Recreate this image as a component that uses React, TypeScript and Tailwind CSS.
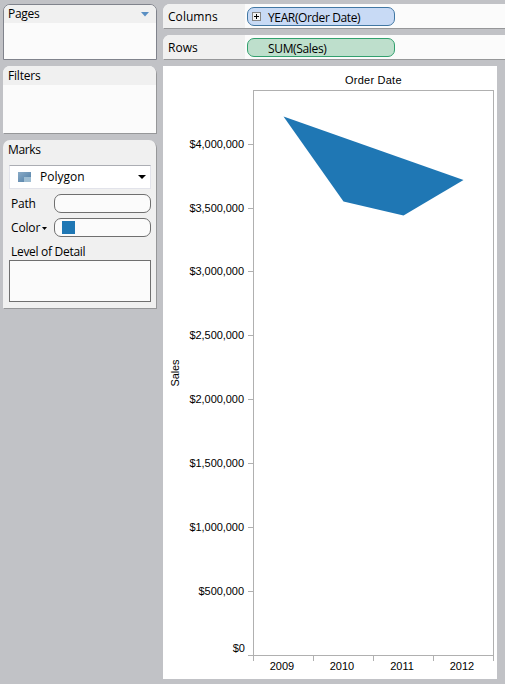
import React from 'react';

const ui = "font-['Open_Sans','Noto_Sans',sans-serif] text-[12px] leading-[16px] text-black";

const yTicks = [
  { label: '$4,000,000', y: 144 },
  { label: '$3,500,000', y: 208 },
  { label: '$3,000,000', y: 271 },
  { label: '$2,500,000', y: 335 },
  { label: '$2,000,000', y: 399 },
  { label: '$1,500,000', y: 463 },
  { label: '$1,000,000', y: 527 },
  { label: '$500,000', y: 591 },
];
const years = ['2009', '2010', '2011', '2012'];

function Shelf({ label, children }: { label: string; children: React.ReactNode }) {
  return (
    <div className="flex h-[24px] w-[342px] overflow-hidden rounded-tl-[7px] bg-[#fbfbfb] shadow-[1px_1px_0_#969799]">
      <div className="w-[82px] shrink-0 bg-[#f0f0f0] pl-[5px] pt-[5px] tracking-[0.05px]">{label}</div>
      <div className="pl-[2px] pt-[3px]">{children}</div>
    </div>
  );
}

function Chart() {
  return (
    <svg
      width="334"
      height="613"
      viewBox="163 66 334 613"
      className="block bg-white font-['Liberation_Sans',Arial,sans-serif] text-[11px]"
    >
      <polygon points="283.5,116.5 463.5,180 403.5,215.5 343.5,201.5" fill="#1f77b4" />
      <g stroke="#b0b0b0" fill="none" shapeRendering="crispEdges">
        <rect x="253.5" y="90.5" width="240" height="565" />
        {yTicks.map((t) => (
          <path key={t.label} d={`M248 ${t.y + 0.5}H253`} />
        ))}
        <path d="M248 655.5H253" />
        {[253.5, 313.5, 373.5, 433.5, 493.5].map((x) => (
          <path key={x} d={`M${x} 655V661`} />
        ))}
      </g>
      <text x="345" y="84" textLength="56.5">Order Date</text>
      {yTicks.map((t) => (
        <text key={t.label} x="244" y={t.y + 4} textAnchor="end" letterSpacing="-0.05">{t.label}</text>
      ))}
      <text x="245" y="652" textAnchor="end">$0</text>
      {years.map((year, i) => (
        <text key={year} x={282 + i * 60} y="670" textAnchor="middle">{year}</text>
      ))}
      <text transform="translate(179 386.5) rotate(-90)" textLength="27">Sales</text>
    </svg>
  );
}

export default function App() {
  return (
    <div className={`flex h-[684px] w-[505px] gap-[6px] overflow-hidden bg-[#c1c2c6] pl-[3px] pt-[4px] ${ui}`}>
      <aside className="flex w-[154px] shrink-0 flex-col">
        <section className="h-[56px] overflow-hidden rounded-t-[7px] border border-[#80838c] bg-[#fbfbfb]">
          <div className="flex h-[18px] justify-between bg-[#f0f0f0] pl-[4px] pr-[7px] pt-px tracking-[-0.3px]">
            Pages
            <svg width="8" height="5" className="mt-[6px]"><path d="M0 0H8L4 4.5Z" fill="#5a8fc3" /></svg>
          </div>
        </section>
        <section className="mt-[6px] h-[67px] w-[153px] overflow-hidden rounded-t-[7px] bg-[#fbfbfb] shadow-[1px_1px_0_#969799]">
          <div className="h-[19px] bg-[#f0f0f0] pl-[5px] pt-[2px] tracking-[-0.2px]">Filters</div>
        </section>
        <section className="mt-[7px] flex h-[168px] w-[153px] flex-col rounded-t-[7px] bg-[#f0f0f0] pl-[6px] pr-[5px] pt-[2px] shadow-[1px_1px_0_#969799]">
          <div className="-ml-px h-[23px] tracking-[-0.35px]">Marks</div>
          <div className="flex h-[24px] items-center border border-[#e2e3ea] border-t-[#abadb3] bg-white pl-[8px] pr-[4px]">
            <svg width="13" height="10">
              <defs>
                <linearGradient id="mark" x1="0" y1="0" x2="1" y2="1">
                  <stop stopColor="#8aabc7" /><stop offset="1" stopColor="#4f7da5" />
                </linearGradient>
              </defs>
              <rect width="13" height="10" fill="url(#mark)" />
              <rect x="6" y="5" width="7" height="5" fill="#9ebdd2" />
            </svg>
            <span className="ml-[9px] flex-1 tracking-[0px]">Polygon</span>
            <svg width="8" height="4"><path d="M0 0H8L4 4Z" fill="#000" /></svg>
          </div>
          <div className="mt-[5px] flex h-[19px] items-center">
            <span className="w-[45px] pl-[2px] tracking-[-0.2px]">Path</span>
            <div className="h-[19px] flex-1 rounded-[7px] border border-[#6f6f6f] bg-[#fbfbfb]" />
          </div>
          <div className="mt-[5px] flex h-[19px] items-center">
            <span className="flex w-[45px] items-center pl-[2px] tracking-[-0.15px]">
              <span className="w-[31px]">Color</span>
              <svg width="5" height="3" className="mt-px"><path d="M0 0H5L2.5 3Z" fill="#000" /></svg>
            </span>
            <div className="flex h-[19px] flex-1 items-center rounded-[7px] border border-[#6f6f6f] bg-[#fbfbfb] pl-[7px]">
              <div className="h-[13px] w-[13px] bg-[#1f77b4]" />
            </div>
          </div>
          <div className="mt-[7px] whitespace-nowrap pl-[2px] tracking-[-0.3px]">Level of Detail</div>
          <div className="h-[42px] border border-[#6f6f6f] bg-[#fbfbfb]" />
        </section>
      </aside>
      <main className="flex w-[342px] shrink-0 flex-col">
        <Shelf label="Columns">
          <div className="flex h-[19px] w-[148px] items-center rounded-[7px] border border-[#4177a3] bg-[#c8daf5] pl-[4px]">
            <svg width="9" height="9" shapeRendering="crispEdges">
              <rect x=".5" y=".5" width="8" height="8" fill="#f2f2f2" stroke="#858585" />
              <path d="M2 4.5H7M4.5 2V7" stroke="#000" />
            </svg>
            <span className="ml-[7px] whitespace-nowrap pt-[2px] tracking-[-0.37px]">YEAR(Order Date)</span>
          </div>
        </Shelf>
        <div className="mt-[7px]">
          <Shelf label="Rows">
            <div className="flex h-[19px] w-[148px] items-center rounded-[7px] border border-[#32a06e] bg-[#bedfcc] pl-[20px] pt-[2px] tracking-[-0.35px]">
              SUM(Sales)
            </div>
          </Shelf>
        </div>
        <div className="mt-[7px]"><Chart /></div>
      </main>
    </div>
  );
}
